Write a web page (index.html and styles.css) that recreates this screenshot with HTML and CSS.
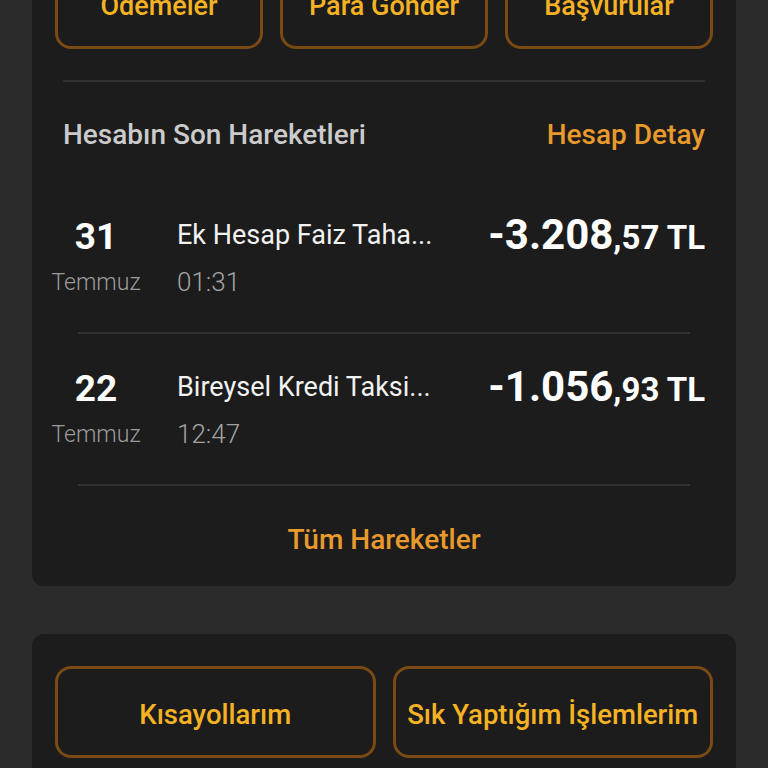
FILE: index.html
```html
<!DOCTYPE html>
<html lang="tr">
<head>
<meta charset="utf-8">
<title>Hesap</title>
<link rel="stylesheet" href="styles.css">
</head>
<body>
<main class="page">
  <section class="card card-account">
    <div class="quick-actions">
      <button class="action-btn">Ödemeler</button>
      <button class="action-btn">Para Gönder</button>
      <button class="action-btn">Başvurular</button>
    </div>
    <hr class="divider divider-top">
    <div class="section-head">
      <h2 class="section-title">Hesabın Son Hareketleri</h2>
      <a class="section-link">Hesap Detay</a>
    </div>
    <ul class="tx-list">
      <li class="tx">
        <div class="tx-date">
          <span class="tx-day">31</span>
          <span class="tx-month">Temmuz</span>
        </div>
        <div class="tx-info">
          <span class="tx-desc">Ek Hesap Faiz Taha...</span>
          <span class="tx-time">01:31</span>
        </div>
        <div class="tx-amount"><span class="amt-main">-3.208</span><span class="amt-sub">,57 TL</span></div>
      </li>
      <li class="tx">
        <div class="tx-date">
          <span class="tx-day">22</span>
          <span class="tx-month">Temmuz</span>
        </div>
        <div class="tx-info">
          <span class="tx-desc">Bireysel Kredi Taksi...</span>
          <span class="tx-time">12:47</span>
        </div>
        <div class="tx-amount"><span class="amt-main">-1.056</span><span class="amt-sub">,93 TL</span></div>
      </li>
    </ul>
    <div class="card-foot">
      <a class="foot-link">Tüm Hareketler</a>
    </div>
  </section>
  <section class="card card-shortcuts">
    <div class="shortcut-row">
      <button class="action-btn big">Kısayollarım</button>
      <button class="action-btn big">Sık Yaptığım İşlemlerim</button>
    </div>
  </section>
</main>
</body>
</html>
```

FILE: styles.css
```css
* { box-sizing: border-box; }
html, body {
  margin: 0;
  padding: 0;
  background: #2b2b2b;
  font-family: Roboto, "Noto Sans", "Liberation Sans", sans-serif;
  overflow: hidden;
}
.page {
  width: 768px;
  padding: 0 32px;
  margin-top: -66px;
  display: flex;
  flex-direction: column;
  gap: 48px;
}
.card {
  background: #1c1c1c;
  border-radius: 12px;
  padding: 23px 23px 0;
}
.quick-actions {
  display: grid;
  grid-template-columns: repeat(3, 1fr);
  gap: 17px;
}
.action-btn {
  height: 92px;
  background: #1c1c1c;
  border: 3px solid #7a4a12;
  border-radius: 16px;
  color: #f5b324;
  font-family: Roboto, "Noto Sans", sans-serif;
  font-size: 27px;
  font-weight: 500;
  padding: 6px 0 0;
}
.divider {
  border: 0;
  height: 2px;
  background: #303030;
  margin: 0;
}
.divider-top {
  margin: 31px 8px 0;
}
.section-head {
  display: flex;
  justify-content: space-between;
  align-items: center;
  padding: 0 8px;
  height: 40px;
  margin-top: 32px;
}
.section-title {
  margin: 0;
  font-size: 28px;
  font-weight: 500;
  color: #cbcbcb;
}
.section-link, .foot-link {
  font-size: 28px;
  font-weight: 500;
  color: #e89a2c;
}
.tx-list {
  list-style: none;
  margin: 28px 0 0;
  padding: 0;
}
.tx {
  display: flex;
  align-items: flex-start;
  padding: 35px 8px 34px 0;
  margin: 0;
  border-bottom: 2px solid #303030;
  border-image: linear-gradient(to right, transparent 24px, #303030 24px, #303030 calc(100% - 24px), transparent calc(100% - 24px)) 1;
}
.tx-date {
  width: 82px;
  display: flex;
  flex-direction: column;
  align-items: center;
  gap: 12px;
}
.tx-day {
  font-size: 37px;
  line-height: 36px;
  font-weight: 700;
  color: #ffffff;
  margin-top: 2px;
}
.tx-month {
  font-size: 23px;
  line-height: 30px;
  font-weight: 300;
  color: #9b9b9b;
  white-space: nowrap;
  margin-top: 1px;
}
.tx-info {
  margin-left: 40px;
  flex: 1;
  display: flex;
  flex-direction: column;
  gap: 14px;
}
.tx-desc {
  font-size: 27px;
  line-height: 36px;
  color: #f2f2f2;
}
.tx-time {
  font-size: 26px;
  line-height: 30px;
  font-weight: 300;
  color: #a3a3a3;
}
.tx-amount {
  line-height: 36px;
  color: #ffffff;
  font-weight: 700;
  white-space: nowrap;
}
.amt-main { font-size: 42px; }
.amt-sub { font-size: 33px; }
.card-foot {
  height: 100px;
  display: flex;
  align-items: center;
  justify-content: center;
  padding-top: 6px;
}
.card-shortcuts {
  padding-top: 32px;
  padding-bottom: 24px;
}
.shortcut-row {
  display: grid;
  grid-template-columns: 1fr 1fr;
  gap: 17px;
}
.action-btn.big {
  font-size: 27.5px;
  padding: 4px 0 0;
}
```
